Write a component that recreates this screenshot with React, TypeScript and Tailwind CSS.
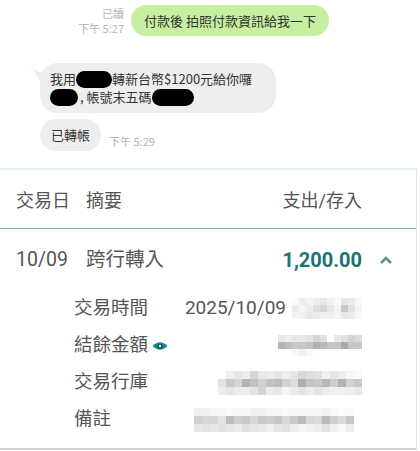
import React from "react";

const FONT = { fontFamily: 'Roboto, "Noto Sans CJK TC", "Noto Sans", sans-serif' };
const CHAT_FONT = { fontFamily: '"Noto Sans CJK TC", "Noto Sans", sans-serif' };

// pixelated blur blocks, each row is a list of grey levels
type Mosaic = number[][];

function Blur({ cells, size = 7 }: { cells: Mosaic; size?: number }) {
  return (
    <div className="flex flex-col">
      {cells.map((row, i) => (
        <div key={i} className="flex">
          {row.map((g, j) => (
            <div
              key={j}
              style={{ width: size, height: size, background: `rgb(${g},${g},${g})` }}
            />
          ))}
        </div>
      ))}
    </div>
  );
}

const timeBlur: Mosaic = [
  [250, 236, 244, 236, 230, 242, 250, 230, 236, 248],
  [236, 244, 236, 222, 215, 232, 244, 200, 228, 244],
  [244, 240, 232, 236, 240, 240, 244, 232, 236, 246],
];
const balanceBlur: Mosaic = [
  [255, 255, 255, 255, 232, 238, 230, 232, 226, 212, 224, 255, 232, 224, 212, 220],
  [255, 255, 255, 255, 180, 190, 200, 198, 196, 178, 186, 196, 196, 170, 198, 200],
  [255, 255, 255, 255, 255, 255, 248, 240, 248, 255, 255, 255, 255, 255, 255, 255],
];
const bankBlur: Mosaic = [
  [255, 255, 240, 230, 236, 214, 232, 236, 228, 238, 230, 214, 220, 224, 240, 230, 236, 246, 250],
  [255, 226, 200, 212, 180, 196, 210, 196, 188, 210, 220, 176, 196, 200, 184, 204, 178, 210, 200],
  [255, 236, 230, 236, 238, 228, 212, 236, 232, 244, 236, 230, 236, 228, 236, 240, 240, 238, 232],
];
const noteBlur: Mosaic = [
  [240, 240, 246, 246, 250, 248, 248, 240, 240, 246, 246, 250, 248, 248, 246, 246, 240, 248, 252, 250, 255],
  [208, 216, 214, 226, 188, 206, 200, 214, 200, 206, 198, 214, 200, 186, 214, 218, 186, 208, 218, 198, 255],
  [230, 226, 232, 224, 230, 236, 224, 228, 232, 240, 230, 224, 236, 244, 240, 236, 226, 240, 248, 238, 255],
];

function Redact({ w }: { w: number }) {
  return (
    <span
      className="inline-block h-[17px] rounded-full bg-black align-middle"
      style={{ width: w }}
    />
  );
}

function DetailRow({ label, children }: { label: React.ReactNode; children: React.ReactNode }) {
  return (
    <div className="flex h-[37px] items-center pl-[74px] pr-[54px]">
      <div className="flex w-[111px] items-center text-[18.5px] text-[#555]">{label}</div>
      <div className="flex flex-1 items-center justify-end">{children}</div>
    </div>
  );
}

export default function App() {
  return (
    <div className="h-[451px] w-[420px] overflow-hidden bg-white" style={FONT}>
      {/* chat */}
      <div className="h-[168px] pt-[5px]" style={CHAT_FONT}>
        <div className="flex items-end gap-[7px] pl-[80px]">
          <div className="flex w-[44px] flex-col items-end text-[11px] leading-[15px] text-[#b3b3b3]">
            <span>已讀</span>
            <span className="whitespace-nowrap">下午 5:27</span>
          </div>
          <div className="flex h-[31px] items-center rounded-full bg-[#c6ef9f] px-[13px] text-[13px] text-[#333]">
            付款後 拍照付款資訊給我一下
          </div>
        </div>

        <div className="relative mt-[27px] ml-[40px] w-[236px] rounded-[18px] bg-[#eeeeee] px-[10px] py-[7px] text-[13px] leading-[18px] text-[#333]">
          <svg
            className="absolute left-[-9px] top-[3px]"
            width="14"
            height="14"
            viewBox="0 0 14 14"
          >
            <path d="M0 0 Q6 8 14 6 L14 14 L8 14 Q4 6 0 0 Z" fill="#eeeeee" />
          </svg>
          <div className="flex items-center whitespace-nowrap">
            我用<Redact w={36} />轉新台幣$1200元給你囉
          </div>
          <div className="flex items-center whitespace-nowrap">
            <Redact w={28} />
            <span className="ml-[2px]">, 帳號末五碼</span>
            <Redact w={42} />
          </div>
        </div>

        <div className="mt-[6px] ml-[40px] flex items-end gap-[8px]">
          <div className="flex h-[32px] items-center rounded-full bg-[#eeeeee] px-[11px] text-[13px] text-[#333]">
            已轉帳
          </div>
          <span className="pb-[2px] text-[11px] text-[#b3b3b3]">下午 5:29</span>
        </div>
      </div>

      {/* bank detail card */}
      <div className="h-[282px] w-[417px] border-t-2 border-r border-b-2 border-t-[#e5f2ed] border-r-[#e2e2e2] border-b-[#d0d0d0]">
        <div className="flex h-[59px] items-center border-b border-[#7db9a5] pt-[3px] pl-[16px] pr-[54px] text-[18px] text-[#555]">
          <span className="w-[70px]">交易日</span>
          <span className="flex-1">摘要</span>
          <span>支出/存入</span>
        </div>

        <div className="flex h-[58px] items-center pt-[3px] pl-[16px] pr-[24px] text-[19.5px] text-[#555]">
          <span className="w-[70px]">10/09</span>
          <span className="flex-1">跨行轉入</span>
          <span className="text-[20px] font-bold text-[#1b7374]">1,200.00</span>
          <svg className="ml-[18px]" width="12" height="8" viewBox="0 0 12 8">
            <path d="M1 7 L6 2 L11 7" stroke="#4e9a80" strokeWidth="2.6" fill="none" />
          </svg>
        </div>

        <div className="pt-[3px]">
          <DetailRow label="交易時間">
            <span className="mr-[6px] text-[19px] text-[#555]">2025/10/09</span>
            <Blur cells={timeBlur} />
          </DetailRow>
          <DetailRow
            label={
              <>
                結餘金額
                <svg className="ml-[4px]" width="16" height="10" viewBox="0 0 16 10">
                  <path d="M0.5 5 Q8 -2.5 15.5 5 Q8 12.5 0.5 5 Z" fill="#1f8a8a" />
                  <circle cx="8" cy="5" r="2.6" fill="#0c4d4d" />
                  <circle cx="8" cy="5" r="1.2" fill="#fff" />
                </svg>
              </>
            }
          >
            <Blur cells={balanceBlur} />
          </DetailRow>
          <DetailRow label="交易行庫">
            <Blur cells={bankBlur} size={8} />
          </DetailRow>
          <DetailRow label="備註">
            <Blur cells={noteBlur} size={8} />
          </DetailRow>
        </div>
      </div>
    </div>
  );
}
